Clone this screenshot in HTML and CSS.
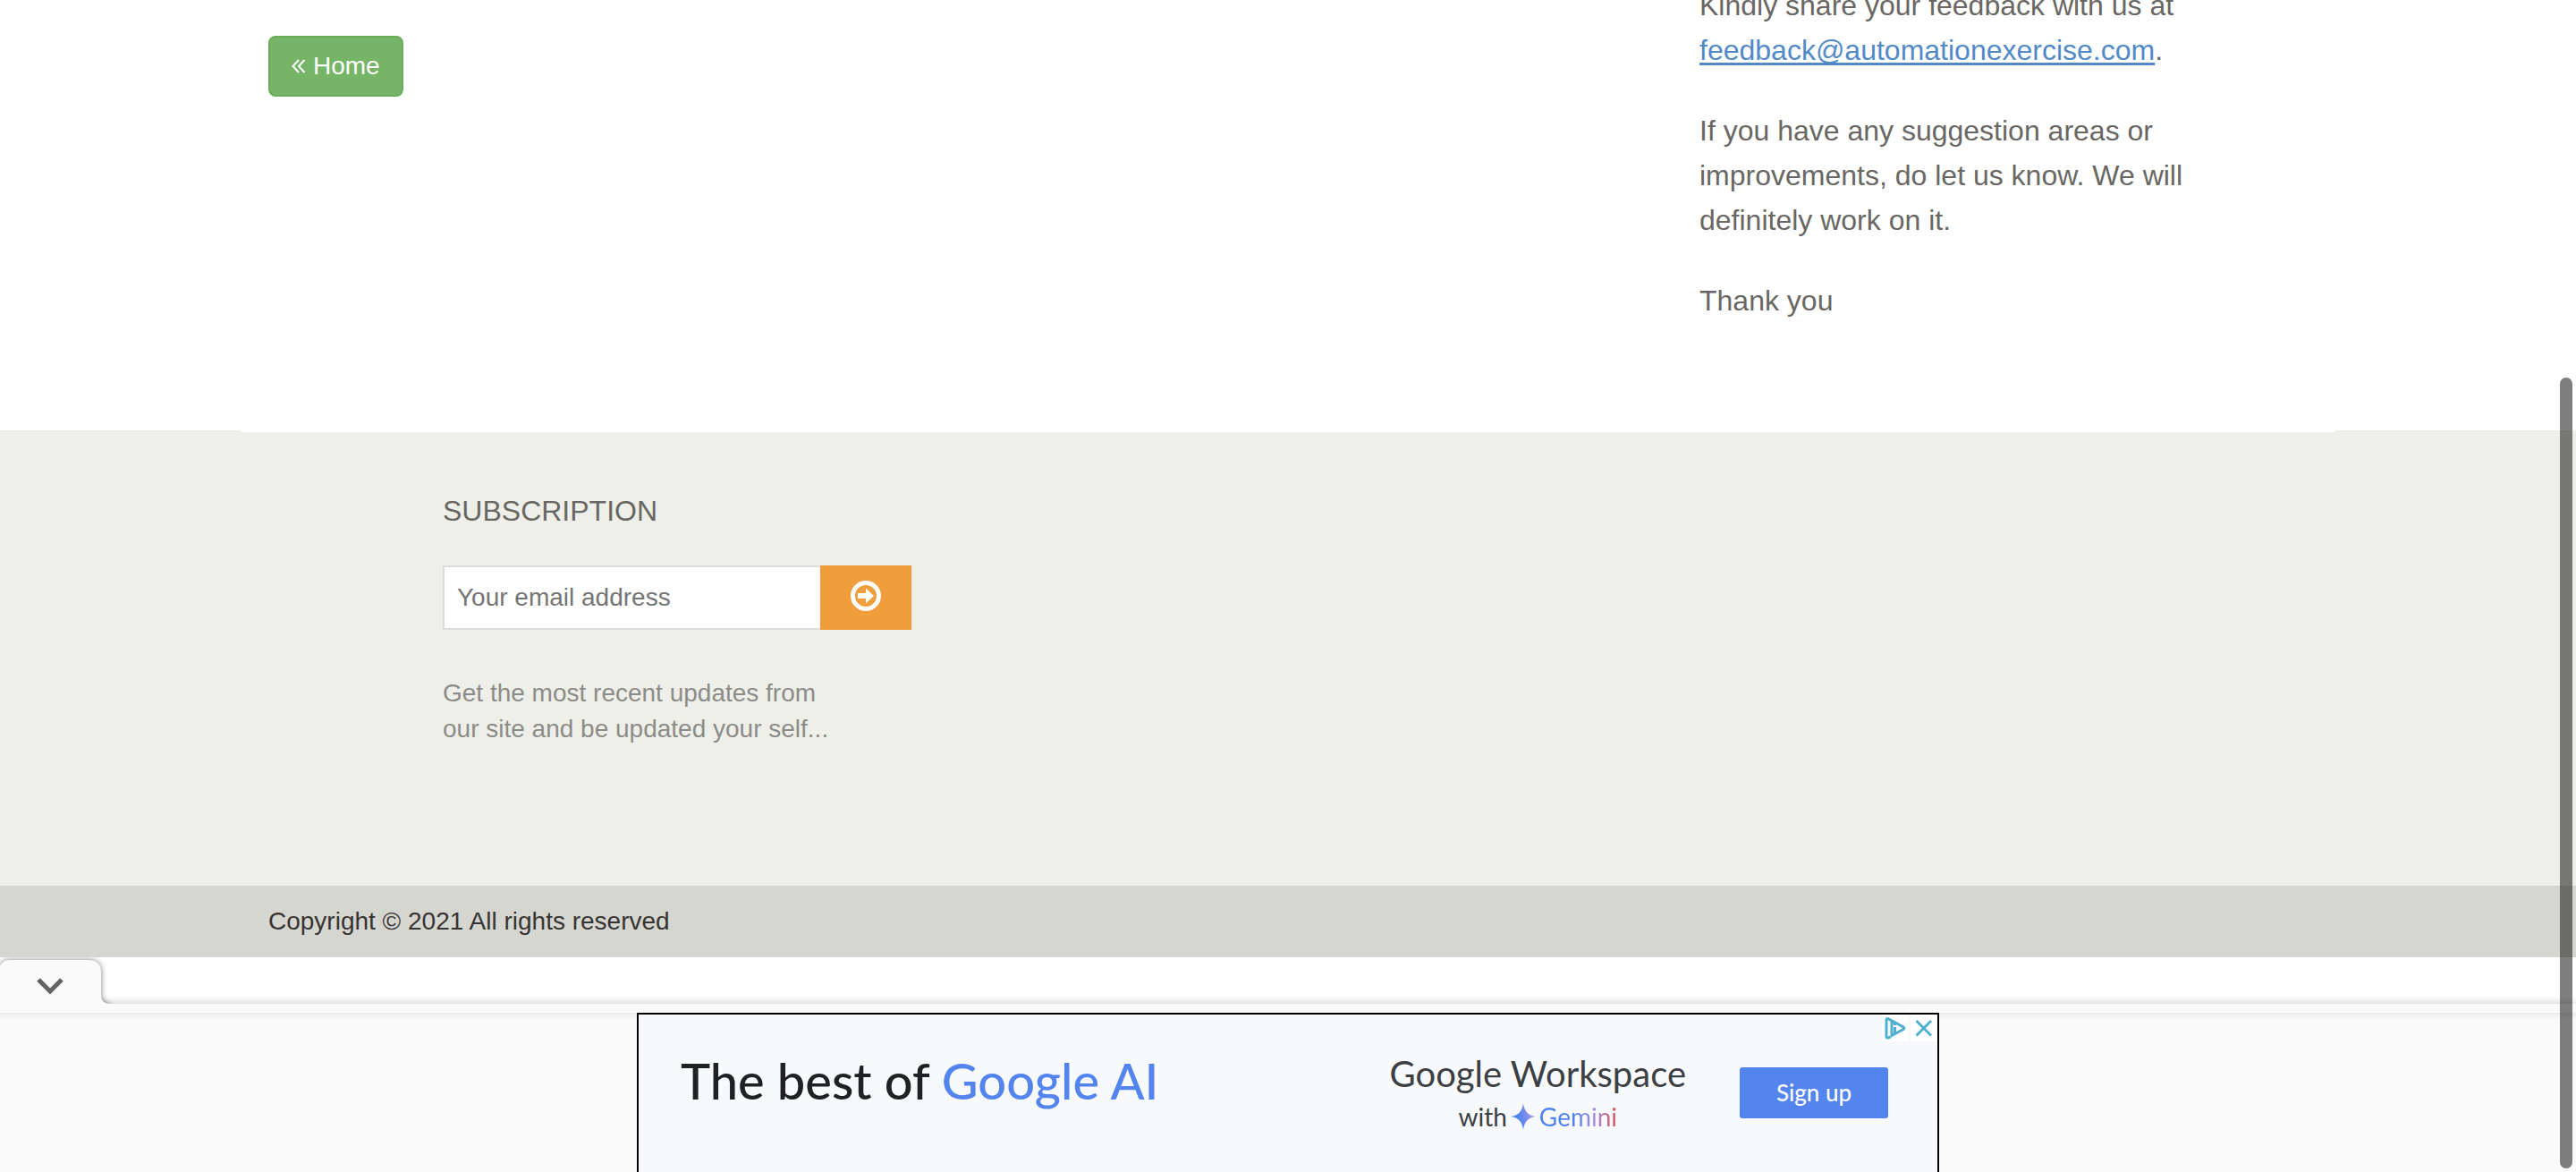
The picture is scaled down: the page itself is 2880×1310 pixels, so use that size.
FILE: index.html
```
<!DOCTYPE html>
<html lang="en">
<head>
<meta charset="utf-8">
<title>Automation Exercise</title>
<link rel="stylesheet" href="styles.css">
</head>
<body>
<main class="container main">
  <div class="main-left">
    <a class="btn-home" href="#">
      <svg class="btn-icon" viewBox="0 0 16 16" aria-hidden="true"><path d="M8 1L1.500 8L8 15M14.500 1L8 8L14.500 15"/></svg>
      Home
    </a>
  </div>
  <aside class="feedback">
    <p>Kindly share your feedback with us at <a href="mailto:feedback@automationexercise.com">feedback@automationexercise.com</a>.</p>
    <p>If you have any suggestion areas or improvements, do let us know. We will definitely work on it.</p>
    <p>Thank you</p>
  </aside>
</main>

<footer class="footer">
  <div class="container footer-widget">
    <form class="subscribe">
      <h2>Subscription</h2>
      <div class="subscribe-row">
        <input type="email" placeholder="Your email address" aria-label="Your email address">
        <button type="button" aria-label="Subscribe">
          <svg viewBox="0 0 34 34" aria-hidden="true"><circle cx="17" cy="17" r="14.500"/><path d="M8 14h9V8.500L26 17l-9 8.500V20H8z"/></svg>
        </button>
      </div>
      <p>Get the most recent updates from<br>our site and be updated your self...</p>
    </form>
  </div>
  <div class="footer-bottom">
    <p class="container">Copyright © 2021 All rights reserved</p>
  </div>
</footer>

<section class="dock" aria-label="Advertisement">
  <button class="dock-tab" type="button" aria-label="Collapse">
    <svg viewBox="0 0 136 52" aria-hidden="true">
      <path class="tab-shape" d="M-2 60V16Q0 3 12 3H99Q113 3 113 17V41Q113 52 122 52V60Z"/>
      <path class="tab-chevron" d="M43 25L56 38L69 25"/>
    </svg>
  </button>
  <div class="dock-strip"></div>
  <div class="dock-body">
    <div class="ad">
      <p class="ad-title">The best of <span>Google AI</span></p>
      <div class="ad-brand">
        <p class="ad-product">Google Workspace</p>
        <p class="ad-with">with
          <svg viewBox="0 0 28 30" aria-hidden="true">
            <defs><linearGradient id="spark" x1="0" y1="0.600" x2="1" y2="0.400"><stop offset="0.300" stop-color="#4e83ee"/><stop offset="1" stop-color="#b89be6"/></linearGradient></defs>
            <path fill="url(#spark)" d="M14 0Q15.500 13.500 28 15Q15.500 16.500 14 30Q12.500 16.500 0 15Q12.500 13.500 14 0Z"/>
          </svg>
          <span>Gemini</span>
        </p>
      </div>
      <a class="ad-cta" href="#">Sign up</a>
      <div class="ad-choices">
        <a href="#" aria-label="AdChoices"><svg viewBox="0 0 30 30" aria-hidden="true"><path d="M9.500 25L7 26Q5 26.500 5 24.500V6Q5 4 7 4.700L24 14Q26 15.300 24 16.500L11 23.500V8"/><path d="M14.500 14v7.500M14.500 10v2"/></svg></a>
        <a href="#" aria-label="Close ad"><svg viewBox="0 0 30 30" aria-hidden="true"><path d="M6.500 7L23 23.500M23 7L6.500 23.500"/></svg></a>
      </div>
    </div>
  </div>
</section>
<div class="scroll-thumb"></div>
</body>
</html>
```
FILE: styles.css
```
* {
  box-sizing: border-box;
}

html,
body {
  height: 100%;
}

body {
  margin: 0;
  display: flex;
  flex-direction: column;
  overflow: hidden;
  background: #fff;
  color: #696763;
  font-family: "Liberation Sans", Arial, sans-serif;
  font-size: 28px;
}

p,
h2 {
  margin: 0;
}

svg {
  display: block;
}

.container {
  width: 100%;
  max-width: 2340px;
  margin: 0 auto;
  padding: 0 30px;
}

/* Main */
.main {
  display: flex;
  justify-content: space-between;
  padding-right: 0;
  padding-bottom: 120px;
}

.main-left {
  padding-top: 40px;
}

.btn-home {
  display: flex;
  align-items: center;
  gap: 8px;
  height: 68px;
  padding: 0 24px;
  border: 2px solid #69ad58;
  border-radius: 8px;
  background: #76b567;
  color: #fff;
  text-decoration: none;
}

.btn-icon {
  width: 16px;
  height: 16px;
  fill: none;
  stroke: #fff;
  stroke-width: 2;
}

.feedback {
  display: flex;
  flex-direction: column;
  gap: 40px;
  width: 780px;
  margin-top: -19px;
  padding: 0 110px 0 70px;
  font-size: 32px;
  line-height: 50px;
}

.feedback a {
  color: #5289c7;
  text-decoration: underline;
  text-decoration-thickness: 3px;
  text-underline-offset: 3px;
  text-decoration-skip-ink: none;
}

/* Footer */
.footer {
  background: #eeefe9;
}

.footer-widget {
  padding: 0 225px 155px;
  border-top: 2px solid #fff;
}

.subscribe {
  width: 524px;
}

.subscribe h2 {
  margin-top: 66px;
  font-size: 32px;
  font-weight: 400;
  line-height: 44px;
  text-transform: uppercase;
}

.subscribe-row {
  display: flex;
  height: 72px;
  margin: 39px 0 51px;
}

.subscribe input {
  flex: 1;
  min-width: 0;
  padding: 0 14px;
  border: 2px solid #ddd;
  border-right: 0;
  border-radius: 0;
  background: #fff;
  font: inherit;
}

.subscribe input::placeholder {
  color: #757575;
  opacity: 1;
}

.subscribe button {
  display: flex;
  justify-content: center;
  width: 102px;
  padding: 17px 0;
  border: 0;
  background: #f09e3b;
}

.subscribe svg {
  width: 34px;
  height: 34px;
  fill: #fff;
}

.subscribe circle {
  fill: none;
  stroke: #fff;
  stroke-width: 5;
}

.subscribe p {
  color: #8c8c88;
  line-height: 40px;
}

.footer-bottom {
  background: #d6d6d0;
  color: #363432;
  line-height: 80px;
}

/* Docked advertisement */
.dock {
  flex: 1;
  display: flex;
  flex-direction: column;
  min-height: 0;
}

.dock-tab {
  position: relative;
  z-index: 1;
  width: 136px;
  height: 52px;
  padding: 0;
  border: 0;
  background: none;
}

.dock-tab svg {
  width: 136px;
  height: 52px;
}

.tab-shape {
  fill: #fafafa;
  filter: drop-shadow(0 0 3px rgba(0, 0, 0, 0.5));
}

.tab-chevron {
  fill: none;
  stroke: #616161;
  stroke-width: 5;
}

.dock-strip {
  flex: none;
  height: 10px;
  background: #fafafa;
  box-shadow: 0 -1px 10px rgba(0, 0, 0, 0.2);
}

.dock-body {
  flex: 1;
  display: flex;
  justify-content: center;
  background: linear-gradient(#ececec, #fafafa 8px);
}

.ad {
  position: relative;
  display: flex;
  align-items: flex-start;
  width: 1456px;
  padding: 0 55px 0 47px;
  border: 2px solid #000;
  border-bottom: 0;
  background: #f8f9fc;
  color: #3c4043;
  font-family: Lato, "Open Sans", sans-serif;
}

.ad-title {
  margin-top: 40px;
  color: #202124;
  font-size: 56px;
  font-weight: 500;
  line-height: 68px;
}

.ad-title span {
  color: #5484ed;
}

.ad-brand {
  display: flex;
  flex-direction: column;
  align-items: center;
  margin: 40px 60px 0 auto;
}

.ad-product {
  font-size: 40px;
  line-height: 52px;
}

.ad-with {
  display: flex;
  align-items: center;
  gap: 4px;
  line-height: 44px;
}

.ad-with svg {
  width: 28px;
  height: 30px;
}

.ad-with span {
  background: linear-gradient(90deg, #4e83ee 45%, #a58ee0 70%, #d9534f);
  background-clip: text;
  color: transparent;
}

.ad-cta {
  width: 166px;
  margin-top: 59px;
  border-radius: 3px;
  background: #5484ed;
  color: #fff;
  font-size: 26px;
  font-weight: 500;
  line-height: 57px;
  text-align: center;
  text-decoration: none;
}

.ad-choices {
  position: absolute;
  top: 0;
  right: 0;
  display: flex;
  gap: 2px;
}

.ad-choices a {
  background: #fff;
}

.ad-choices svg {
  width: 30px;
  height: 30px;
  fill: none;
  stroke: #4fb0cf;
  stroke-width: 3;
}

/* Overlay scrollbar */
.scroll-thumb {
  position: fixed;
  top: 422px;
  right: 4px;
  bottom: 4px;
  z-index: 2;
  width: 14px;
  border-radius: 7px;
  background: rgba(0, 0, 0, 0.5);
}
```
